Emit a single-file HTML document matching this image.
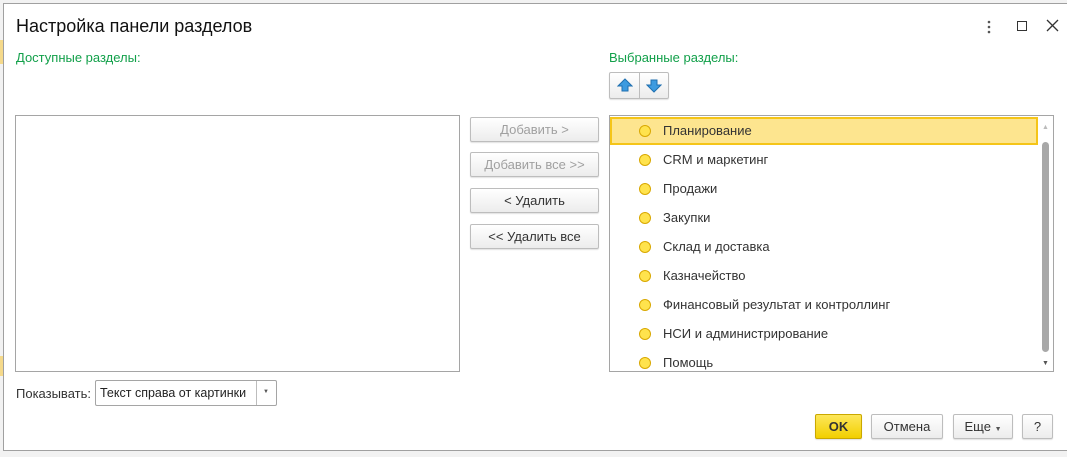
<!DOCTYPE html>
<html><head><meta charset="utf-8"><style>
*{box-sizing:border-box;margin:0;padding:0}
body{width:1067px;height:457px;background:#f2f2f2;position:relative;overflow:hidden;font-family:"Liberation Sans",Arial,sans-serif;font-size:13px;color:#333}
.dlg{position:absolute;left:3px;top:3px;width:1070px;height:448px;background:#fff;border:1px solid #a0a0a0}
.a{position:absolute}
.title{left:12px;top:12px;font-size:18px;color:#111}
.green{color:#12a04a;font-size:13px}
.box{border:1px solid #a5a5a5;background:#fff}
.btn{position:absolute;border:1px solid #bdbdbd;border-radius:2px;background:linear-gradient(#fff,#ececec);text-align:center;line-height:23px;height:25px;font-size:13px;color:#333;box-shadow:0 1px 1px rgba(0,0,0,.12)}
.dis{color:#a0a0a0}
.item{position:absolute;left:1px;width:427px;height:28px;line-height:28px;font-size:13px;color:#333}
.item .c{position:absolute;left:28px;top:8px;width:12px;height:12px;border-radius:50%;background:#ffe34d;border:1.5px solid #d9a800}
.item span{position:absolute;left:52px}
</style></head><body>
<div class="a" style="left:0;top:40px;width:3px;height:24px;background:#f5d98a"></div>
<div class="a" style="left:0;top:356px;width:3px;height:20px;background:#f5d98a"></div>
<div class="dlg">
<div class="a title">Настройка панели разделов</div>
<svg class="a" style="left:982px;top:15px" width="6" height="16"><circle cx="3" cy="3" r="1.3" fill="#555"/><circle cx="3" cy="8" r="1.3" fill="#555"/><circle cx="3" cy="13" r="1.3" fill="#555"/></svg>
<div class="a" style="left:1013px;top:17px;width:10px;height:10px;border:1.5px solid #333"></div>
<svg class="a" style="left:1042px;top:15px" width="13" height="13"><path d="M1 1L12 12M12 1L1 12" stroke="#333" stroke-width="1.3"/></svg>
<div class="a green" style="left:12px;top:46px">Доступные разделы:</div>
<div class="a green" style="left:605px;top:46px">Выбранные разделы:</div>
<div class="a" style="left:605px;top:68px;width:60px;height:27px;border:1px solid #bdbdbd;border-radius:2px;background:linear-gradient(#fff,#ececec);box-shadow:0 1px 1px rgba(0,0,0,.12)">
<div class="a" style="left:29px;top:0;width:1px;height:25px;background:#bdbdbd"></div>
<svg class="a" style="left:7px;top:5px" width="16" height="15"><path d="M8 1L15 8H11V13H5V8H1Z" fill="#3d9be0" stroke="#1f6fb0" stroke-width="1"/></svg>
<svg class="a" style="left:36px;top:5px" width="16" height="15"><path d="M8 14L15 7H11V2H5V7H1Z" fill="#3d9be0" stroke="#1f6fb0" stroke-width="1"/></svg>
</div>
<div class="a box" style="left:11px;top:111px;width:445px;height:257px"></div>
<div class="btn dis" style="left:466px;top:113px;width:129px">Добавить &gt;</div>
<div class="btn dis" style="left:466px;top:148px;width:129px">Добавить все &gt;&gt;</div>
<div class="btn" style="left:466px;top:184px;width:129px">&lt; Удалить</div>
<div class="btn" style="left:466px;top:220px;width:129px">&lt;&lt; Удалить все</div>
<div class="a box" style="left:605px;top:111px;width:445px;height:257px;overflow:hidden">
<div class="item" style="top:1px;background:#fde58f;border:2px solid #f5c518;width:428px;left:0"><i class="c" style="left:27px;top:6px"></i><span style="left:51px;line-height:24px">Планирование</span></div>
<div class="item" style="top:30px"><i class="c"></i><span>CRM и маркетинг</span></div>
<div class="item" style="top:59px"><i class="c"></i><span>Продажи</span></div>
<div class="item" style="top:88px"><i class="c"></i><span>Закупки</span></div>
<div class="item" style="top:117px"><i class="c"></i><span>Склад и доставка</span></div>
<div class="item" style="top:146px"><i class="c"></i><span>Казначейство</span></div>
<div class="item" style="top:175px"><i class="c"></i><span>Финансовый результат и контроллинг</span></div>
<div class="item" style="top:204px"><i class="c"></i><span>НСИ и администрирование</span></div>
<div class="item" style="top:233px"><i class="c"></i><span>Помощь</span></div>
<div class="a" style="left:432px;top:8px;font-size:7px;color:#bbb">▲</div>
<div class="a" style="left:432px;top:26px;width:7px;height:210px;border-radius:4px;background:#a8a8a8"></div>
<div class="a" style="left:432px;top:244px;font-size:7px;color:#555">▼</div>
</div>
<div class="a" style="left:12px;top:382px">Показывать:</div>
<div class="a" style="left:91px;top:376px;width:182px;height:26px;border:1px solid #a5a5a5;border-radius:2px;background:#fff">
<div class="a" style="left:4px;top:5px;color:#222;font-size:12.5px">Текст справа от картинки</div>
<div class="a" style="left:160px;top:0;width:1px;height:24px;background:#bdbdbd"></div>
<div class="a" style="left:167px;top:8px;font-size:6px;color:#555">▼</div>
</div>
<div class="btn" style="left:811px;top:410px;width:47px;background:linear-gradient(#fde75a,#f2cf00);border-color:#caa800;font-weight:bold;color:#333">OK</div>
<div class="btn" style="left:867px;top:410px;width:72px">Отмена</div>
<div class="btn" style="left:949px;top:410px;width:60px">Еще <span style="font-size:7px;color:#555">▼</span></div>
<div class="btn" style="left:1018px;top:410px;width:31px">?</div>
</div>
</body></html>
